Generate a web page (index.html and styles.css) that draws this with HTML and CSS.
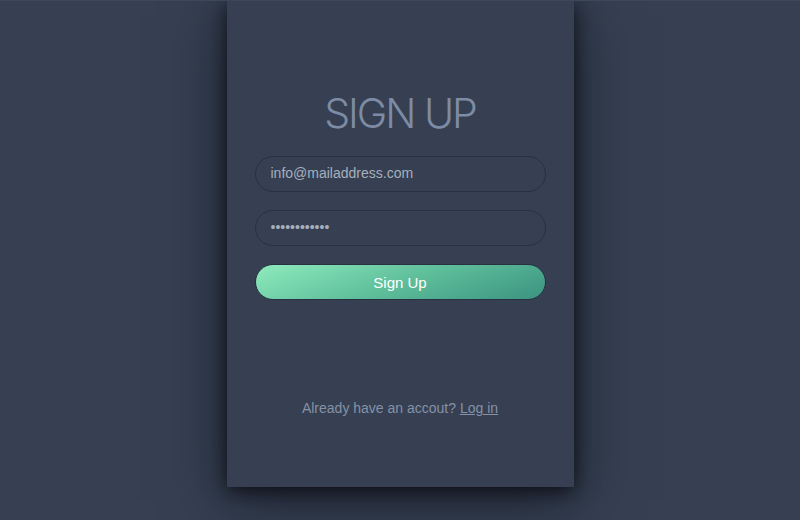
FILE: index.html
```html
<!DOCTYPE html>
<html lang="en">
<head>
    <meta charset="UTF-8">
    <meta name="viewport" content="width=device-width, initial-scale=1.0">
    <title>Sign Up</title>
    <link rel="stylesheet" href="styles.css">
</head>
<body>
    <div class="card">
        <h1>SIGN UP</h1>
        <form class="signup-form">
            <input type="email" class="field" value="info@mailaddress.com">
            <input type="password" class="field" value="mypassword12">
            <button type="submit" class="btn">Sign Up</button>
        </form>
        <p class="login-note">Already have an accout? <a href="#">Log in</a></p>
    </div>
</body>
</html>
```

FILE: styles.css
```css
* {
    box-sizing: border-box;
    margin: 0;
    padding: 0;
}

body {
    font-family: "Liberation Sans", Arial, sans-serif;
    background-color: #364052;
    height: 520px;
    overflow: hidden;
    border-top: 1px solid #3d4759;
}

.card {
    width: 347px;
    height: 486px;
    margin: 0 auto;
    background-color: #364052;
    box-shadow: 0 4px 18px rgba(6, 8, 14, 0.8), 0 14px 60px rgba(6, 8, 14, 0.5);
    padding: 90px 28px 0;
    display: flex;
    flex-direction: column;
}

h1 {
    text-align: center;
    font-family: Inter, sans-serif;
    font-weight: 300;
    font-size: 41px;
    line-height: 44px;
    color: #7d8ca4;
    letter-spacing: -2px;
}

.signup-form {
    margin-top: 21px;
    display: flex;
    flex-direction: column;
    gap: 18px;
}

.field,
.btn {
    width: 100%;
    height: 36px;
    border-radius: 18px;
    border: 1px solid #283140;
    font-family: "Liberation Sans", Arial, sans-serif;
}

.field {
    background: transparent;
    color: #a7afbc;
    font-size: 14px;
    padding: 0 15px 3px;
    outline: none;
}

.btn {
    color: #ffffff;
    font-size: 15px;
    background: linear-gradient(160deg, #8eebbd 0%, #5fbf9b 50%, #3b9380 100%);
    cursor: pointer;
}

.login-note {
    margin-top: auto;
    margin-bottom: 71px;
    text-align: center;
    font-size: 14px;
    color: #8591a6;
}

.login-note a {
    color: #8591a6;
}
```
